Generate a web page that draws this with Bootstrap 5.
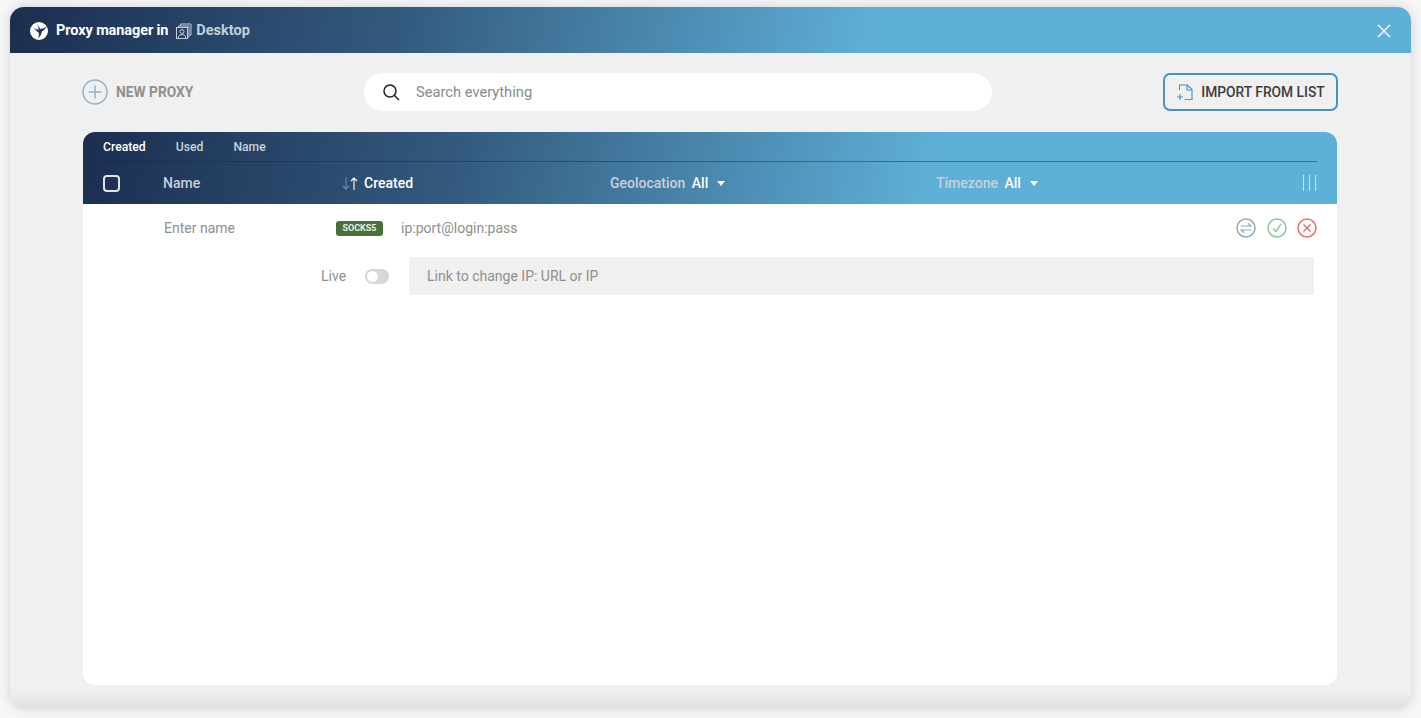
<!DOCTYPE html>
<html lang="en">
<head>
  <meta charset="UTF-8">
  <title>Proxy manager</title>
  <link href="https://cdn.jsdelivr.net/npm/bootstrap@5.3.3/dist/css/bootstrap.min.css" rel="stylesheet">
  <style>
    html, body { height: 100%; }
    body { background: #f7f7f8; padding: 7px 10px 10px; overflow: hidden; font-family: Roboto, "Liberation Sans", sans-serif; font-size: 14px; }
    .pm-window { height: 701px; background: #f0f0f0; border-radius: 14px; box-shadow: 0 0 12px rgba(60,70,90,.22); overflow: hidden; position: relative; }
    .pm-window::after { content: ""; position: absolute; left: 0; right: 0; bottom: 0; height: 16px; background: linear-gradient(rgba(0,0,0,0), rgba(0,0,0,.07)); }
    .pm-grad { background: linear-gradient(100deg, #1b2e50 0%, #335a7e 30%, #5fb0d8 68%, #5fb0d8 100%); }
    .pm-head { height: 46px; padding: 1px 20px 0; color: #fff; background: linear-gradient(100deg, #1b2e50 0%, #335a7e 28%, #5fb0d8 62%, #5fb0d8 100%); }
    .pm-title { font-size: 14.5px; font-weight: 700; letter-spacing: -.1px; }
    .pm-desktop { font-size: 14.5px; font-weight: 700; color: #c6ced8; }
    .pm-toolbar { padding: 20px 73px 21px 72px; }
    .pm-new { width: 282px; color: #8f8f8f; font-size: 13.8px; font-weight: 700; }
    .pm-search { width: 628px; height: 38px; background: #fff; border-radius: 19px; padding-left: 19px; color: #8a8a8a; font-size: 14.7px; }
    .pm-import { width: 175px; height: 38px; border: 2px solid #4a90c2; border-radius: 7px; color: #3c3c3c; font-size: 13.8px; font-weight: 500; background: transparent; padding: 0; }
    .pm-table { margin: 0 74px 0 73px; height: 553px; background: #fff; border-radius: 12px; overflow: hidden; }
    .pm-tabs { margin: 0 20px; height: 30px; padding-top: 2px; border-bottom: 1px solid rgba(20,40,70,.45); color: #c8d0da; font-size: 12.2px; font-weight: 500; }
    .pm-tabs span { margin-right: 30px; }
    .pm-cols { display: grid; grid-template-columns: 60px 179px 268px 326px 1fr auto; height: 42px; padding: 0 20px; align-items: center; color: #c8d0da; font-size: 14px; font-weight: 500; }
    .pm-on { color: #fff; }
    .pm-arrows { margin-right: 6px; }
    .pm-val { margin-left: 3px; }
    .pm-check { width: 17px; height: 17px; border: 2px solid #dfe3e8; border-radius: 4px; }
    .pm-caret { display: inline-block; border-left: 4px solid transparent; border-right: 4px solid transparent; border-top: 5px solid #fff; margin-left: 9px; vertical-align: 2px; }
    .pm-row { height: 48px; padding: 0 20px 0 81px; color: #8f8f8f; font-size: 14px; }
    .pm-name { width: 172px; }
    .pm-tag { width: 47px; height: 15px; line-height: 15px; background: #4a7039; color: #e8f0e4; font-size: 9px; font-weight: 700; border-radius: 3px; text-align: center; margin-right: 18px; }
    .pm-acts { gap: 10px; }
    .pm-acts svg:first-child { margin-right: 1px; }
    .pm-row2 { padding-left: 238px; padding-right: 23px; }
    .pm-toggle { width: 24px; height: 15px; background: #d6d6d6; border-radius: 8px; margin: 0 20px 0 19px; padding: 2px; }
    .pm-toggle i { display: block; width: 11px; height: 11px; background: #fff; border-radius: 50%; }
    .pm-link { flex: 1; height: 38px; background: #f0f0f0; border-radius: 3px; padding-left: 18px; }
  </style>
</head>
<body>
<div class="pm-window">
  <div class="pm-head d-flex align-items-center">
    <svg width="18" height="18" viewBox="0 0 18 18" class="me-2"><circle cx="9" cy="9" r="9" fill="#fff"/><path d="M7 1.500 Q9 5.500 10.500 7 Q13.500 6.500 17 4.500 Q14.500 8 12 9.500 Q11.500 13 8 17 Q9.500 12.500 8.500 10.500 Q6 9 4 6 Q7 7.800 8.800 7.500 Q8 4 7 1.500Z" fill="#1f3557"/></svg>
    <span class="pm-title">Proxy manager in</span>
    <svg width="16" height="16" viewBox="0 0 16 16" fill="none" stroke="#c6ced8" stroke-width="1" class="ms-2 me-1"><path d="M4.500 2.500V1h10.500v11h-1.500"/><path d="M2.500 4.500V3H13v11h-1"/><rect x=".5" y="4.500" width="11" height="11"/><circle cx="6" cy="8.500" r="2"/><path d="M2.500 15v-1.500q1-2 3.500-2t3.500 2V15"/></svg>
    <span class="pm-desktop">Desktop</span>
    <svg width="14" height="14" viewBox="0 0 14 14" stroke="#fff" stroke-width="1.200" class="ms-auto"><path d="M1 1l12 12M13 1L1 13"/></svg>
  </div>

  <div class="pm-toolbar d-flex align-items-center">
    <div class="pm-new d-flex align-items-center">
      <svg width="26" height="26" viewBox="0 0 26 26" fill="none" stroke="#94b2c9" stroke-width="1.500" class="me-2"><circle cx="13" cy="13" r="12"/><path d="M13 6.500v13M6.500 13h13"/></svg>
      NEW PROXY
    </div>
    <div class="pm-search d-flex align-items-center">
      <svg width="17" height="17" viewBox="0 0 17 17" fill="none" stroke="#1e1e1e" stroke-width="1.500" class="me-3"><circle cx="7" cy="7" r="6"/><path d="M11.500 11.500l4.500 4.500"/></svg>
      Search everything
    </div>
    <button class="pm-import btn ms-auto d-flex align-items-center justify-content-center">
      <svg width="17" height="17" viewBox="0 0 17 17" fill="none" stroke="#4a90c2" stroke-width="1.100" class="me-2"><path d="M3.500 6V1h8l4.500 4.500V15.500H9"/><path d="M11 1v5h5"/><path d="M4 10v6M1 13h6"/></svg>
      IMPORT FROM LIST
    </button>
  </div>

  <div class="pm-table">
    <div class="pm-grad">
      <div class="pm-tabs d-flex align-items-center"><span class="pm-on">Created</span><span>Used</span><span>Name</span></div>
      <div class="pm-cols">
        <div class="pm-check"></div>
        <div>Name</div>
        <div class="pm-on d-flex align-items-center">
          <svg width="16" height="13" viewBox="0 0 16 13" fill="none" stroke-width="1.100" class="pm-arrows"><path stroke="#6f8ba6" d="M4 0v12M1 9l3 3 3-3"/><path stroke="#fff" d="M12 13V1M9 4l3-3 3 3"/></svg>
          <span>Created</span>
        </div>
        <div>Geolocation <span class="pm-on pm-val">All</span><i class="pm-caret"></i></div>
        <div>Timezone <span class="pm-on pm-val">All</span><i class="pm-caret"></i></div>
        <svg width="15" height="16" viewBox="0 0 15 16" stroke="#cfe0ea" stroke-width="1"><path d="M1.500 0v16M7.500 0v16M13.500 0v16"/></svg>
      </div>
    </div>
    <div class="pm-row d-flex align-items-center">
      <div class="pm-name">Enter name</div>
      <div class="pm-tag">SOCKS5</div>
      <div>ip:port@login:pass</div>
      <div class="ms-auto d-flex pm-acts">
        <svg width="20" height="20" viewBox="0 0 20 20" fill="none" stroke="#8faabf" stroke-width="1.500"><circle cx="10" cy="10" r="9"/><path stroke-width="1.200" d="M5 8h10l-3-2.500M15 12H5l3 2.500"/></svg>
        <svg width="20" height="20" viewBox="0 0 20 20" fill="none" stroke="#8cc7a6" stroke-width="1.500"><circle cx="10" cy="10" r="9"/><path d="M6 10.500l3 3 5-7.500"/></svg>
        <svg width="20" height="20" viewBox="0 0 20 20" fill="none" stroke="#ea6f73" stroke-width="1.500"><circle cx="10" cy="10" r="9"/><path d="M6.500 6.500l7 7M13.500 6.500l-7 7"/></svg>
      </div>
    </div>
    <div class="pm-row pm-row2 d-flex align-items-center">
      <span>Live</span>
      <div class="pm-toggle"><i></i></div>
      <div class="pm-link d-flex align-items-center">Link to change IP: URL or IP</div>
    </div>
  </div>
</div>
<script src="https://cdn.jsdelivr.net/npm/bootstrap@5.3.3/dist/js/bootstrap.bundle.min.js"></script>
</body>
</html>
